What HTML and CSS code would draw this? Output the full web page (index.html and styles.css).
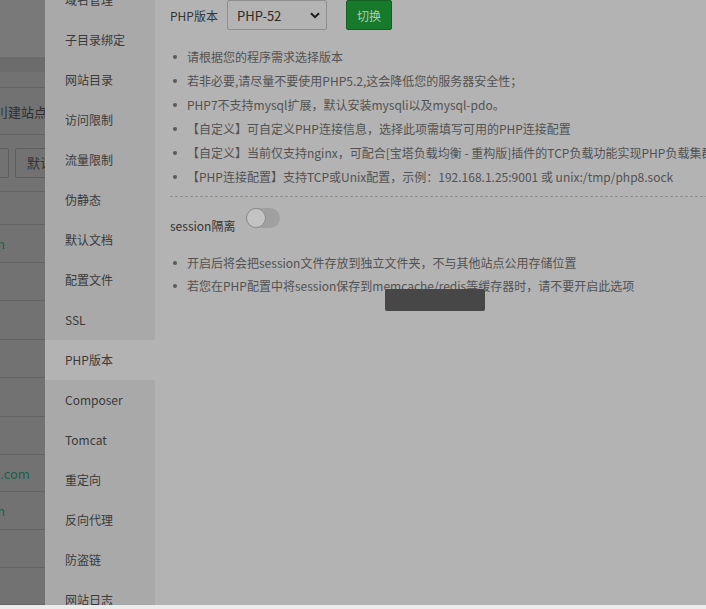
FILE: index.html
```html
<!DOCTYPE html>
<html lang="zh-CN">
  <head>
    <meta charset="UTF-8" />
    <title>PHP版本</title>
    <link rel="stylesheet" href="styles.css">
  </head>
  <body>
    <div class="screen">
      <!-- dimmed site list behind the layer -->
      <div class="bgpage">
        <div class="bgTop"></div>
        <div class="bgBand"></div>
        <div class="bgRow h16"></div>
        <div class="bgRow h47"><span class="bgText">刂建站点时</span></div>
        <div class="bgRow h57 btns">
          <span class="bgBtn first"></span>
          <span class="bgBtn">默认</span>
        </div>
        <div class="bgRow h33"></div>
        <div class="bgRow h38"><span class="bgLink">m</span></div>
        <div class="bgRow h38"></div>
        <div class="bgRow h39"></div>
        <div class="bgRow h38"></div>
        <div class="bgRow h39"></div>
        <div class="bgRow h38"></div>
        <div class="bgRow h37"><span class="bgLink">3.com</span></div>
        <div class="bgRow h38"><span class="bgLink">m</span></div>
        <div class="bgRow h38"></div>
        <div class="bgRow h37"></div>
      </div>

      <div class="layer">
        <ul class="sideMenu">
          <li>域名管理</li>
          <li>子目录绑定</li>
          <li>网站目录</li>
          <li>访问限制</li>
          <li>流量限制</li>
          <li>伪静态</li>
          <li>默认文档</li>
          <li>配置文件</li>
          <li>SSL</li>
          <li class="on">PHP版本</li>
          <li>Composer</li>
          <li>Tomcat</li>
          <li>重定向</li>
          <li>反向代理</li>
          <li>防盗链</li>
          <li>网站日志</li>
        </ul>

        <div class="mainBox">
          <div class="phpRow">
            <span class="rowLabel">PHP版本</span>
            <div class="fakeSelect">
              <span>PHP-52</span>
              <svg width="10" height="7" viewBox="0 0 10 7"><path d="M1 1.2 L5 5.2 L9 1.2" fill="none" stroke="#1e1e1e" stroke-width="2"/></svg>
            </div>
            <button class="btnSwitch">切换</button>
          </div>

          <ul class="tips">
            <li>请根据您的程序需求选择版本</li>
            <li>若非必要,请尽量不要使用PHP5.2,这会降低您的服务器安全性；</li>
            <li>PHP7不支持mysql扩展，默认安装mysqli以及mysql-pdo。</li>
            <li>【自定义】可自定义PHP连接信息，选择此项需填写可用的PHP连接配置</li>
            <li>【自定义】当前仅支持nginx，可配合[宝塔负载均衡 - 重构版]插件的TCP负载功能实现PHP负载集群</li>
            <li>【PHP连接配置】支持TCP或Unix配置，示例：192.168.1.25:9001 或 unix:/tmp/php8.sock</li>
          </ul>

          <div class="dashLine"></div>

          <div class="sessionRow">
            <span class="rowLabel">session隔离</span>
            <span class="toggle"><span class="knob"></span></span>
          </div>

          <ul class="tips tips2">
            <li>开启后将会把session文件存放到独立文件夹，不与其他站点公用存储位置</li>
            <li>若您在PHP配置中将session保存到memcache/redis等缓存器时，请不要开启此选项</li>
          </ul>

          <div class="msgBox"></div>
        </div>
      </div>
    </div>
    <div class="bottomStrip"></div>
  </body>
</html>
```

FILE: styles.css
```css
html, body {
  margin: 0;
  padding: 0;
}
body {
  width: 706px;
  height: 609px;
  overflow: hidden;
  background: #737373;
  font-family: "Noto Sans CJK SC", "Liberation Sans", sans-serif;
  font-size: 12px;
}
ul {
  margin: 0;
  padding: 0;
  list-style: none;
}
.screen {
  display: flex;
  height: 605px;
  overflow: hidden;
}
.bottomStrip {
  height: 4px;
  background: #ececec;
}

/* background page */
.bgpage {
  width: 45px;
  flex-shrink: 0;
  background: #727272;
  overflow: hidden;
}
.bgTop {
  height: 57px;
  background: #797979;
}
.bgBand {
  height: 15px;
  background: #6c6c6c;
}
.bgRow {
  border-bottom: 1px solid #656565;
  box-sizing: border-box;
  display: flex;
  align-items: center;
  white-space: nowrap;
  font-size: 13px;
}
.h16 { height: 16px; }
.h33 { height: 33px; }
.h37 { height: 37px; }
.h38 { height: 38px; }
.h39 { height: 39px; }
.h47 { height: 47px; }
.h57 { height: 57px; }
.bgText {
  color: #2e2e2e;
  margin-left: -5px;
}
.bgLink {
  color: #1d5f4c;
  margin-left: -7px;
}
.btns {
  gap: 6px;
}
.bgBtn {
  height: 30px;
  border: 1px solid #5e5e5e;
  border-radius: 2px;
  box-sizing: border-box;
  padding-left: 11px;
  line-height: 28px;
  color: #333;
  width: 40px;
  flex-shrink: 0;
}
.bgBtn.first {
  margin-left: -31px;
}

/* layer */
.layer {
  flex: 1;
  display: flex;
  background: #b3b3b3;
  position: relative;
}
.sideMenu {
  width: 110px;
  flex-shrink: 0;
  background: #a9a9a9;
  margin-top: -20px;
}
.sideMenu li {
  height: 40px;
  line-height: 40px;
  padding-left: 20px;
  color: #3a3a3a;
}
.sideMenu li.on {
  background: #b3b3b3;
}

.mainBox {
  flex: 1;
  padding-left: 15px;
}
.phpRow {
  display: flex;
  align-items: center;
  height: 30px;
}
.rowLabel {
  color: #333;
}
.fakeSelect {
  margin-left: 9px;
  width: 100px;
  height: 30px;
  box-sizing: border-box;
  border: 1px solid #8e8e8e;
  border-radius: 2px;
  display: flex;
  align-items: center;
  justify-content: space-between;
  padding: 0 6px 0 9px;
  color: #2b2b2b;
  font-size: 13px;
}
.btnSwitch {
  margin-left: 19px;
  width: 46px;
  height: 30px;
  background: #177a2b;
  border: 1px solid #12601f;
  border-radius: 2px;
  color: #b6c9b8;
  font-family: inherit;
  font-size: 12px;
  padding: 0;
}

.tips {
  margin-top: 15px;
}
.tips li {
  position: relative;
  line-height: 24px;
  padding-left: 17px;
  color: #525252;
  white-space: nowrap;
}
.tips li::before {
  content: "";
  position: absolute;
  left: 3px;
  top: 10px;
  width: 4px;
  height: 4px;
  border-radius: 50%;
  background: #5a5a5a;
}
.tips2 {
  margin-top: 15px;
}
.tips2 li {
  line-height: 23px;
}
.dashLine {
  margin-top: 7px;
  border-top: 1px dashed #8e8e8e;
}

.sessionRow {
  display: flex;
  align-items: flex-start;
  margin-top: 11px;
  height: 28px;
}
.sessionRow .rowLabel {
  margin-top: 8px;
  line-height: 20px;
}
.toggle {
  margin-left: 11px;
  width: 34px;
  height: 20px;
  border-radius: 10px;
  background: #a0a0a0;
  position: relative;
}
.knob {
  position: absolute;
  left: 0;
  top: 0;
  width: 18px;
  height: 18px;
  border-radius: 50%;
  background: #c3c3c3;
  border: 1px solid #8c8c8c;
}

.msgBox {
  position: absolute;
  left: 340px;
  top: 289px;
  width: 100px;
  height: 22px;
  background: #474747;
  border-radius: 2px;
}
```
